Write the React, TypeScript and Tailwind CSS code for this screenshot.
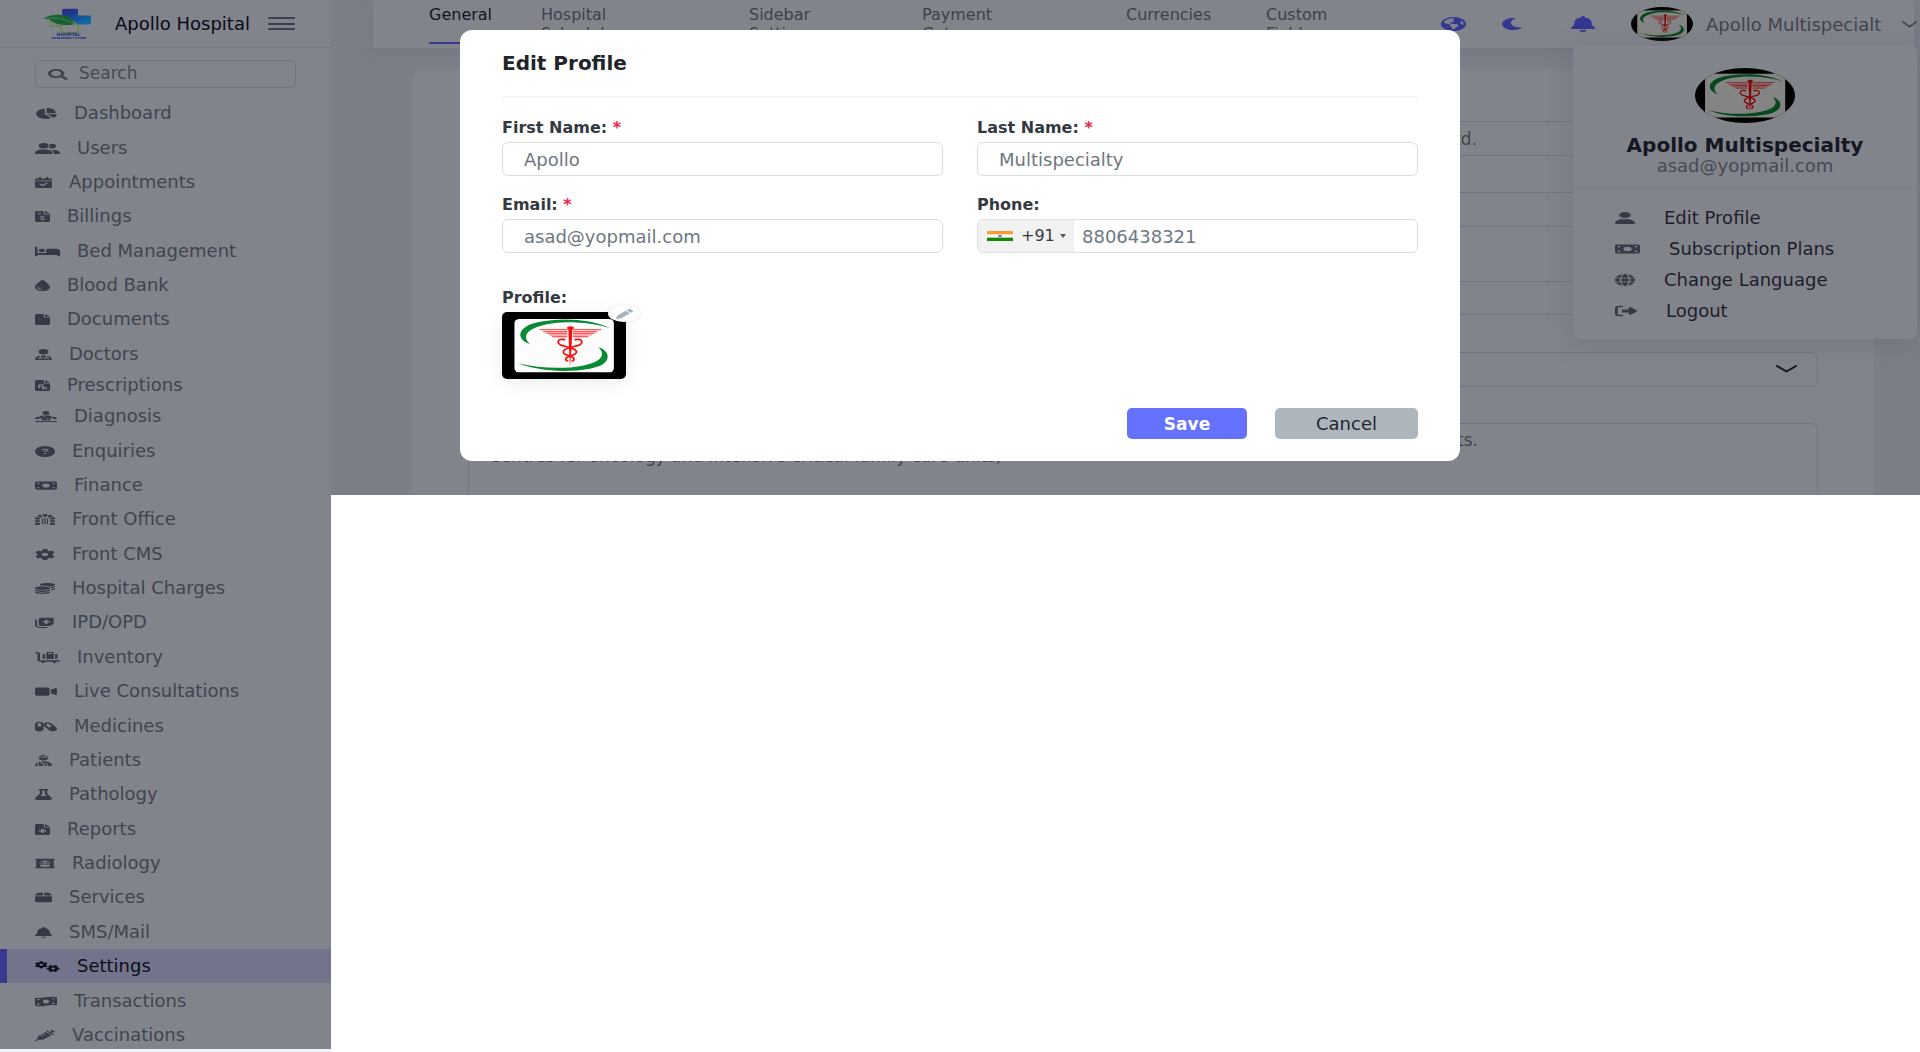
import React from "react";
import type { IconType } from "react-icons";
import { FaMoon, FaSearch } from "react-icons/fa";
import {
  FaBed,
  FaBell,
  FaBox,
  FaCalendarCheck,
  FaCapsules,
  FaCartFlatbedSuitcase,
  FaChartPie,
  FaCircleQuestion,
  FaCoins,
  FaDroplet,
  FaDungeon,
  FaEarthAmericas,
  FaFile,
  FaFileInvoiceDollar,
  FaFileMedical,
  FaFilePrescription,
  FaFlask,
  FaGear,
  FaGears,
  FaGlobe,
  FaMoneyBill,
  FaMoneyBillWave,
  FaNotesMedical,
  FaPen,
  FaPersonDotsFromLine,
  FaRightFromBracket,
  FaSyringe,
  FaUser,
  FaUserDoctor,
  FaUserGroup,
  FaUserInjured,
  FaVideo,
  FaXRay,
} from "react-icons/fa6";

type NavItem = { label: string; icon: IconType; width: string; short?: boolean; active?: boolean };

const navItems: NavItem[] = [
  { label: "Dashboard", icon: FaChartPie, width: "w-[22px]" },
  { label: "Users", icon: FaUserGroup, width: "w-[25px]" },
  { label: "Appointments", icon: FaCalendarCheck, width: "w-[17px]" },
  { label: "Billings", icon: FaFileInvoiceDollar, width: "w-[15px]" },
  { label: "Bed Management", icon: FaBed, width: "w-[25px]" },
  { label: "Blood Bank", icon: FaDroplet, width: "w-[15px]" },
  { label: "Documents", icon: FaFile, width: "w-[15px]" },
  { label: "Doctors", icon: FaUserDoctor, width: "w-[17px]" },
  { label: "Prescriptions", icon: FaFilePrescription, width: "w-[15px]", short: true },
  { label: "Diagnosis", icon: FaPersonDotsFromLine, width: "w-[22px]" },
  { label: "Enquiries", icon: FaCircleQuestion, width: "w-[20px]" },
  { label: "Finance", icon: FaMoneyBill, width: "w-[22px]" },
  { label: "Front Office", icon: FaDungeon, width: "w-[20px]" },
  { label: "Front CMS", icon: FaGear, width: "w-[20px]" },
  { label: "Hospital Charges", icon: FaCoins, width: "w-[20px]" },
  { label: "IPD/OPD", icon: FaNotesMedical, width: "w-[20px]" },
  { label: "Inventory", icon: FaCartFlatbedSuitcase, width: "w-[25px]" },
  { label: "Live Consultations", icon: FaVideo, width: "w-[22px]" },
  { label: "Medicines", icon: FaCapsules, width: "w-[22px]" },
  { label: "Patients", icon: FaUserInjured, width: "w-[17px]" },
  { label: "Pathology", icon: FaFlask, width: "w-[17px]" },
  { label: "Reports", icon: FaFileMedical, width: "w-[15px]" },
  { label: "Radiology", icon: FaXRay, width: "w-[20px]" },
  { label: "Services", icon: FaBox, width: "w-[17px]" },
  { label: "SMS/Mail", icon: FaBell, width: "w-[17px]" },
  { label: "Settings", icon: FaGears, width: "w-[25px]", active: true },
  { label: "Transactions", icon: FaMoneyBillWave, width: "w-[22px]" },
  { label: "Vaccinations", icon: FaSyringe, width: "w-[20px]" },
];

const tabs = [
  { label: "General", width: "w-[112px]", active: true },
  { label: "Hospital Schedules", width: "w-[208px]" },
  { label: "Sidebar Setting", width: "w-[173px]" },
  { label: "Payment Gateway", width: "w-[204px]" },
  { label: "Currencies", width: "w-[140px]" },
  { label: "Custom Fields", width: "w-[84px]" },
];

const menuItems: { label: string; icon: IconType; width: string }[] = [
  { label: "Edit Profile", icon: FaUser, width: "w-[20px]" },
  { label: "Subscription Plans", icon: FaMoneyBill, width: "w-[25px]" },
  { label: "Change Language", icon: FaGlobe, width: "w-[20px]" },
  { label: "Logout", icon: FaRightFromBracket, width: "w-[22px]" },
];

const aboutText =
  "Apollo is a multispecialty hospital that offers advanced clinical care across all major health departments. Centres\u00a0for\u00a0oncology and intensive critical family care units,";

function Caduceus({ className }: { className: string }) {
  return (
    <svg viewBox="159 217 368 201" preserveAspectRatio="none" className={className} aria-hidden="true">
      <rect x="159" y="217" width="368" height="201" fill="#000" />
      <rect x="196" y="238" width="295" height="160" rx="14" ry="12" fill="#fdfdfd" />
      <g fill="#0a8a34">
        <path d="M242 313C200 299 201 261 268 247C338 233 422 238 480 265C420 248 345 242 292 254C226 269 220 292 242 313Z" />
        <path d="M445 322C485 336 486 376 420 387C340 401 262 392 207 371C270 386 340 389 398 378C456 366 468 346 445 322Z" />
      </g>
      <g stroke="#ff5a5a" strokeWidth="3.4">
        <path d="M271 270H353M281 276H353M291 281H353M300 286H353M308 291H353" />
        <path d="M370 270H453M370 276H442M370 281H433M370 286H425M370 291H416" />
      </g>
      <g fill="#fb0d0d">
        <ellipse cx="362" cy="265" rx="10" ry="5" />
        <path d="M356 266H368L365 330L361 381L358 330Z" />
      </g>
      <g fill="none" stroke="#fb0d0d" strokeWidth="5" strokeLinecap="round">
        <path d="M345 300C322 295 320 312 336 317C356 323 382 327 380 338C377 349 352 348 349 356C347 361 350 364 354 364" />
        <path d="M376 300C399 295 402 312 386 317C366 323 338 327 341 338C344 349 369 348 372 356C374 361 371 364 367 364" />
      </g>
    </svg>
  );
}

function HospitalLogo() {
  return (
    <svg viewBox="128 25 148 92" preserveAspectRatio="none" className="h-[31px] w-[49px] shrink-0" aria-label="Hospital Management System">
      <defs>
        <linearGradient id="cross" x1="0" x2="1" y1="0" y2="1">
          <stop offset="0.2" stopColor="#23308a" />
          <stop offset="1" stopColor="#0878a8" />
        </linearGradient>
      </defs>
      <path d="M186 31Q186 27 192 27H228Q234 27 234 31V47H268Q273 47 273 51V70Q273 74 268 74H234L215 60L186 48Z" fill="url(#cross)" />
      <path d="M150 64V78H183V92Q183 98 190 98H227Q234 98 234 92V80Q234 72 218 70H196" fill="none" stroke="#5d8a34" strokeWidth="4" />
      <path d="M128 57C150 42 196 40 213 57C218 63 221 68 222 73C190 80 160 72 148 60Z" fill="#17602f" />
      <path d="M133 57C165 51 196 57 220 72" fill="none" stroke="#7f9a84" strokeWidth="1.5" />
      <text x="205" y="109" fontSize="13" fontWeight="700" fill="#1c2b80" textAnchor="middle">HOSPITAL</text>
      <text x="206" y="116" fontSize="8" fontWeight="700" fill="#1c2b80" textAnchor="middle">MANAGEMENT SYSTEM</text>
    </svg>
  );
}

function Chevron({ className }: { className: string }) {
  return (
    <svg viewBox="0 0 20 8" preserveAspectRatio="none" className={className} fill="none" stroke="currentColor" strokeWidth="2" aria-hidden="true">
      <path d="M1 1L10 6.500L19 1" strokeLinecap="round" strokeLinejoin="round" />
    </svg>
  );
}

function Sidebar() {
  return (
    <aside className="flex h-[calc(100vh-3px)] w-[331px] shrink-0 flex-col overflow-hidden bg-[#82848b] text-[#40444f]">
      <div className="flex h-12 shrink-0 items-center border-b border-[#787b83] pl-[43px]">
        <HospitalLogo />
        <a href="#home" className="ml-[23px] w-[153px] whitespace-nowrap text-[18px] text-[#080b18]">
          Apollo Hospital
        </a>
        <button type="button" aria-label="Toggle sidebar" className="flex h-[13px] w-[27px] flex-col justify-between">
          <span className="h-[2px] w-full rounded bg-[#3d414f]" />
          <span className="h-[2px] w-full rounded bg-[#3d414f]" />
          <span className="h-[2px] w-full rounded bg-[#3d414f]" />
        </button>
      </div>
      <label className="mx-[35px] mb-2 mt-3 flex h-7 shrink-0 items-center gap-[11px] rounded-[5px] border border-[#70747c] px-3">
        <FaSearch preserveAspectRatio="none" className="h-[11px] w-5 shrink-0" />
        <input type="search" placeholder="Search" aria-label="Search" className="w-full min-w-0 bg-transparent text-[17px] outline-none placeholder:text-[#454955]" />
      </label>
      <nav className="flex h-[956px] shrink-0 flex-col">
        {navItems.map(({ label, icon: Icon, width, short, active }) => (
          <a
            key={label}
            href="#nav"
            className={`flex items-center gap-[17px] whitespace-nowrap text-[18px] leading-5 ${short ? "h-7" : "flex-1"} ${
              active ? "border-l-[7px] border-[#373a8f] bg-[#72748b] pl-7 text-[#0b0e1b]" : "pl-[35px]"
            }`}
          >
            <Icon preserveAspectRatio="none" className={`mt-px h-[11px] shrink-0 ${width} ${active ? "text-[#0b0e1b]" : "text-[#363a46]"}`} />
            {label}
          </a>
        ))}
      </nav>
    </aside>
  );
}

function TopBar() {
  return (
    <header className="ml-[42px] mr-[6px] flex h-12 bg-[#82848b] pl-14 shadow-[0_4px_16px_rgba(90,94,115,0.25)]">
      <nav className="flex flex-1">
        {tabs.map((tab) => (
          <a key={tab.label} href="#tab" className={`${tab.width} pt-[5px] text-[16px] leading-[19px] ${tab.active ? "text-[#12151f]" : "text-[#3d414d]"}`}>
            <span className={`flex h-[39px] flex-col ${tab.active ? "mr-[34px] border-b-2 border-[#373a8f]" : ""}`}>
              {tab.label.split(" ").map((word) => (
                <span key={word}>{word} </span>
              ))}
            </span>
          </a>
        ))}
      </nav>
      <div className="flex shrink-0 items-center text-[#34378f]">
        <button type="button" aria-label="Language" className="mr-[35px]">
          <FaEarthAmericas preserveAspectRatio="none" className="h-[14px] w-[25px]" />
        </button>
        <button type="button" aria-label="Dark mode" className="mr-12">
          <FaMoon preserveAspectRatio="none" className="h-3 w-[22px]" />
        </button>
        <button type="button" aria-label="Notifications" className="mr-9">
          <FaBell preserveAspectRatio="none" className="h-4 w-6" />
        </button>
        <button type="button" className="-mr-[3px] flex items-center text-[#40444f]">
          <Caduceus className="mr-[13px] h-[34px] w-[62px] rounded-[50%] brightness-[.52]" />
          <span className="w-[196px] whitespace-nowrap text-left text-[18px]">Apollo Multispecialt</span>
          <Chevron className="h-[7px] w-[15px]" />
        </button>
      </div>
    </header>
  );
}

function UserMenu() {
  return (
    <div className="absolute right-[3px] top-[46px] flex w-[344px] flex-col rounded-md bg-[#82848b] pb-[13px] shadow-[0_4px_24px_rgba(90,94,115,0.4)]">
      <div className="flex flex-col items-center border-b border-[#777a82] pb-3 pt-[22px]">
        <Caduceus className="h-[55px] w-[100px] rounded-[50%] brightness-[.52]" />
        <p className="mt-[11px] text-[20px] font-bold leading-[22px] text-[#151823]">Apollo Multispecialty</p>
        <p className="text-[18px] leading-5 text-[#454955]">asad@yopmail.com</p>
      </div>
      <ul className="mt-[13px] flex flex-col">
        {menuItems.map(({ label, icon: Icon, width }) => (
          <li key={label}>
            <a href="#menu" className="flex h-[31px] items-center gap-[29px] whitespace-nowrap pl-[42px] text-[18px] text-[#1d202b]">
              <Icon preserveAspectRatio="none" className={`h-3 shrink-0 text-[#363a46] ${width}`} />
              {label}
            </a>
          </li>
        ))}
      </ul>
    </div>
  );
}

const fieldClass = "w-full rounded-[6px] border border-[#72757e] bg-transparent text-[17px] text-[#40444f] outline-none";

function SettingsForm() {
  return (
    <div className="ml-[81px] mr-[46px] mt-[21px] h-[426px] overflow-hidden rounded-t-xl bg-[#82848b] px-14 pt-[52px]">
      <input aria-label="Hospital name" readOnly defaultValue="Apollo Hospitals Enterprise Ltd." className={`${fieldClass} block h-[35px] pr-[340px] text-right`} />
      <input aria-label="Contact" readOnly className={`${fieldClass} mt-9 block h-[35px]`} />
      <input aria-label="Address" readOnly className={`${fieldClass} mt-[54px] block h-[34px]`} />
      <div className="relative mt-[37px]">
        <select aria-label="Currency" className={`${fieldClass} block h-[35px] appearance-none`} />
        <Chevron className="pointer-events-none absolute right-[21px] top-[13px] h-[8px] w-[21px] text-[#151823]" />
      </div>
      <textarea
        aria-label="About"
        readOnly
        className={`${fieldClass} mt-9 block h-[110px] resize-none py-2 pl-5 pr-[339px] text-justify leading-4`}
        defaultValue={aboutText}
      />
    </div>
  );
}

function Required() {
  return <span className="text-[#f5203f]">*</span>;
}

const inputClass = "block h-[34px] w-full rounded-[6px] border border-[#dadfe3] bg-white px-[21px] text-[18px] text-[#6e7780] outline-none";
const labelClass = "mb-1 block text-[16px] font-bold leading-5 text-[#343941]";

function EditProfileModal() {
  return (
    <div role="dialog" aria-labelledby="modal-title" className="absolute inset-x-0 top-[30px] mx-auto w-full max-w-[1000px] rounded-xl bg-white px-[42px] pb-[22px]">
      <h2 id="modal-title" className="border-b-2 border-[#f4f5f7] pb-[21px] pt-[21px] text-[20px] font-bold leading-6 text-[#212529]">
        Edit Profile
      </h2>
      <form onSubmit={(event) => event.preventDefault()}>
        <div className="mt-5 grid grid-cols-2 gap-x-[34px] gap-y-[19px]">
          <div>
            <label htmlFor="first" className={labelClass}>First Name: <Required /></label>
            <input id="first" defaultValue="Apollo" className={inputClass} />
          </div>
          <div>
            <label htmlFor="last" className={labelClass}>Last Name: <Required /></label>
            <input id="last" defaultValue="Multispecialty" className={inputClass} />
          </div>
          <div>
            <label htmlFor="email" className={labelClass}>Email: <Required /></label>
            <input id="email" defaultValue="asad@yopmail.com" className={inputClass} />
          </div>
          <div>
            <label htmlFor="phone" className={labelClass}>Phone:</label>
            <div className="flex h-[34px] overflow-hidden rounded-[6px] border border-[#dadfe3] bg-white">
              <button type="button" aria-label="Country code" className="flex w-24 shrink-0 items-center bg-[#f1f1f1] pl-[9px] text-[16px] text-[#343941]">
                <svg viewBox="0 0 26 10" className="mr-2 h-[10px] w-[26px]" aria-hidden="true">
                  <rect width="26" height="10" fill="#fff" />
                  <rect width="26" height="3.400" fill="#ff9933" />
                  <rect y="6.600" width="26" height="3.400" fill="#138808" />
                  <ellipse cx="13" cy="5" rx="2" ry="1.200" fill="#7f7fc4" />
                </svg>
                +91
                <svg viewBox="0 0 6 4" className="ml-[5px] h-1 w-[6px]" fill="#555" aria-hidden="true">
                  <path d="M0 0H6L3 4Z" />
                </svg>
              </button>
              <input id="phone" type="tel" defaultValue="8806438321" className="min-w-0 flex-1 px-2 text-[18px] text-[#6e7780] outline-none" />
            </div>
          </div>
        </div>
        <p className="mb-1 mt-[35px] text-[16px] font-bold leading-5 text-[#343941]">Profile:</p>
        <div className="relative h-[67px] w-[124px] rounded-[5px] shadow-[0_4px_20px_rgba(0,0,0,0.08)]">
          <Caduceus className="h-full w-full rounded-[5px]" />
          <button type="button" aria-label="Change profile picture" className="absolute -right-[14px] -top-[7px] flex h-[17px] w-8 items-center justify-center rounded-[50%] bg-white text-[#a9b2ba] shadow-[0_0_3px_rgba(0,0,0,0.12)]">
            <FaPen preserveAspectRatio="none" className="h-[10px] w-[17px]" />
          </button>
        </div>
        <div className="mt-[29px] flex justify-end gap-7">
          <button type="submit" className="h-[31px] w-[120px] rounded-[5px] bg-[#6571ff] text-[17px] font-bold leading-5 text-white">Save</button>
          <button type="button" className="h-[31px] w-[143px] rounded-[5px] bg-[#adb5bd] text-[18px] leading-5 text-[#24282d]">Cancel</button>
        </div>
      </form>
    </div>
  );
}

export default function App() {
  return (
    <div className="relative flex h-screen overflow-hidden bg-white font-['DejaVu_Sans',sans-serif]">
      <div className="shrink-0 bg-[#f0f3fb]">
        <Sidebar />
      </div>
      <main className="min-w-0 flex-1">
        <div className="relative bg-[#7b7f87]">
          <TopBar />
          <SettingsForm />
          <UserMenu />
        </div>
      </main>
      <EditProfileModal />
    </div>
  );
}
